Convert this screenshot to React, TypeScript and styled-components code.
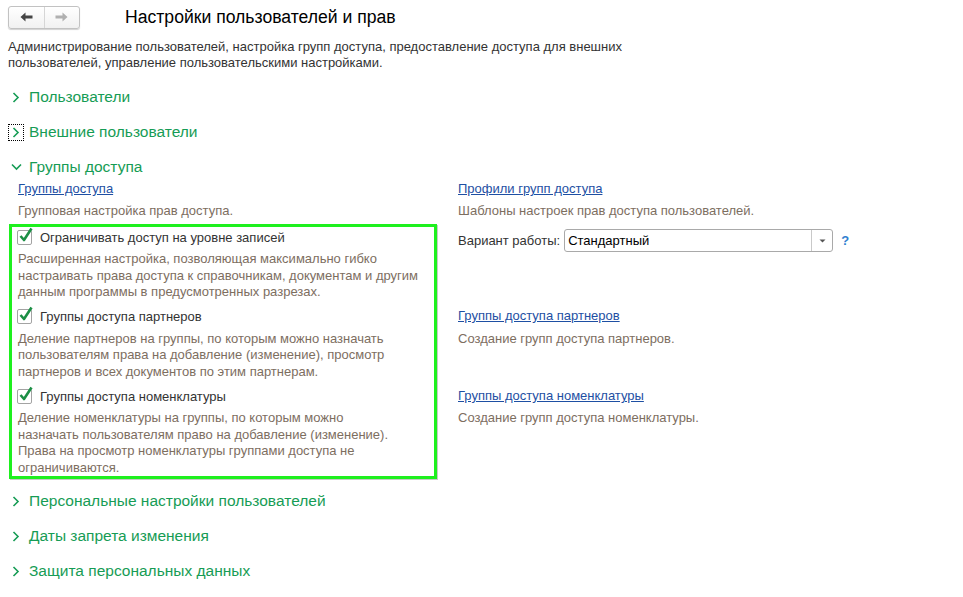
import styled, { createGlobalStyle } from "styled-components";

const GlobalStyle = createGlobalStyle`
  html, body {
    margin: 0;
    padding: 0;
    background: #fff;
  }
  body {
    font-family: "Liberation Sans", Arial, sans-serif;
    font-size: 13px;
    color: #333;
  }
`;

const Page = styled.div`
  width: 963px;
  height: 597px;
  padding: 5px 0 0 8px;
  box-sizing: border-box;
  overflow: hidden;
`;

const TopBar = styled.div`
  display: flex;
  align-items: center;
  height: 24px;
`;

const NavGroup = styled.div`
  display: flex;
  width: 72px;
  height: 23px;
  border: 1px solid #c2c2c2;
  border-radius: 3px;
  background: linear-gradient(#ffffff, #f1f1f1);
  box-shadow: 0 1px 1px rgba(0, 0, 0, 0.18);
  box-sizing: border-box;
`;

const NavButton = styled.div<{ $last?: boolean }>`
  flex: 1;
  display: flex;
  align-items: center;
  justify-content: center;
  border-left: ${({ $last }) => ($last ? "1px solid #d6d6d6" : "none")};
`;

const Title = styled.h1`
  margin: 0 0 0 45px;
  font-size: 17.6px;
  font-weight: normal;
  color: #000;
  line-height: 24px;
`;

const Intro = styled.p`
  margin: 10px 0 0 0;
  width: 660px;
  line-height: 16px;
  color: #333;
`;

const SectionHeader = styled.div<{ $gap?: number }>`
  display: flex;
  align-items: center;
  height: 24px;
  margin-top: ${({ $gap }) => ($gap ?? 11)}px;
  color: #169c55;
  font-size: 15.5px;
`;

const ChevronBox = styled.span<{ $focused?: boolean }>`
  display: flex;
  align-items: center;
  justify-content: center;
  width: 16px;
  height: 17px;
  margin-right: 5px;
  box-sizing: border-box;
  border: 1px dotted ${({ $focused }) => ($focused ? "#000" : "transparent")};
`;

const Columns = styled.div`
  display: flex;
  margin-top: 2px;
`;

const LeftColumn = styled.div`
  width: 428px;
  margin-left: 1px;
`;

const RightColumn = styled.div`
  display: flex;
  flex-direction: column;
  margin-left: 21px;
`;

const Link = styled.a<{ $top?: number }>`
  display: block;
  margin-top: ${({ $top }) => $top ?? 0}px;
  line-height: 16px;
  color: #1e4fa3;
  text-decoration: underline;
  cursor: pointer;
`;

const Hint = styled.div<{ $top?: number }>`
  margin-top: ${({ $top }) => $top ?? 6}px;
  line-height: 16px;
  color: #7d6e5f;
`;

const Indent = styled.div`
  padding-left: 9px;
`;

const Highlight = styled.div`
  margin-top: 5px;
  border: 3px solid #1ef01e;
  box-shadow: 1px 1px 0 #c9c9c9;
  padding: 0 6px 0 5px;
`;

const OptionRow = styled.label`
  display: flex;
  align-items: center;
  height: 20px;
  color: #333;
`;

const CheckBox = styled.span`
  position: relative;
  width: 15px;
  height: 15px;
  margin-right: 8px;
  border: 1px solid #a3a3a3;
  border-radius: 2px;
  background: #fff;
  box-sizing: border-box;
`;

const CheckMark = styled.svg`
  position: absolute;
  left: 1px;
  top: -4px;
`;

const OptionHint = styled.div<{ $last?: boolean }>`
  margin: 4px 0 ${({ $last }) => ($last ? 0 : 6)}px 1px;
  line-height: 16.5px;
  color: #7d6e5f;
`;

const FieldRow = styled.div`
  display: flex;
  align-items: center;
  margin-top: 10px;
  height: 23px;
`;

const FieldLabel = styled.span`
  color: #333;
  margin-right: 4px;
`;

const Select = styled.div`
  display: flex;
  width: 269px;
  height: 23px;
  border: 1px solid #a9a9a9;
  border-radius: 3px;
  box-sizing: border-box;
`;

const SelectValue = styled.div`
  flex: 1;
  display: flex;
  align-items: center;
  padding-left: 3px;
  color: #000;
`;

const SelectButton = styled.div`
  width: 20px;
  display: flex;
  align-items: center;
  justify-content: center;
  border-left: 1px solid #c9c9c9;
`;

const HelpMark = styled.span`
  margin-left: 8px;
  color: #2f7fd0;
  font-weight: bold;
  font-size: 13px;
`;

const ChevronRight = () => (
  <svg width="8" height="11" viewBox="0 0 8 11">
    <path d="M1.5 1 L6 5.5 L1.5 10" fill="none" stroke="#169c55" strokeWidth="1.6" />
  </svg>
);

const ChevronDown = () => (
  <svg width="11" height="8" viewBox="0 0 11 8">
    <path d="M1 1.5 L5.5 6 L10 1.5" fill="none" stroke="#169c55" strokeWidth="1.6" />
  </svg>
);

const Arrow = ({ dir, color }: { dir: "left" | "right"; color: string }) => (
  <svg width="13" height="10" viewBox="0 0 13 10">
    <g transform={dir === "right" ? "translate(13,0) scale(-1,1)" : undefined}>
      <path d="M0.5 5 L5.5 0.5 L5.5 3.5 L12.5 3.5 L12.5 6.5 L5.5 6.5 L5.5 9.5 Z" fill={color} />
    </g>
  </svg>
);

const Checked = ({ children }: { children: string }) => (
  <OptionRow>
    <CheckBox>
      <CheckMark width="14" height="16" viewBox="0 0 14 16">
        <path d="M1.5 9 L5 13 L12.5 1.5" fill="none" stroke="#1c8f45" strokeWidth="2.6" strokeLinejoin="round" />
      </CheckMark>
    </CheckBox>
    {children}
  </OptionRow>
);

export default function App() {
  return (
    <Page>
      <GlobalStyle />
      <TopBar>
        <NavGroup>
          <NavButton>
            <Arrow dir="left" color="#454545" />
          </NavButton>
          <NavButton $last>
            <Arrow dir="right" color="#b0b0b0" />
          </NavButton>
        </NavGroup>
        <Title>Настройки пользователей и прав</Title>
      </TopBar>

      <Intro>
        Администрирование пользователей, настройка групп доступа, предоставление доступа для внешних
        пользователей, управление пользовательскими настройками.
      </Intro>

      <SectionHeader $gap={14}>
        <ChevronBox>
          <ChevronRight />
        </ChevronBox>
        Пользователи
      </SectionHeader>
      <SectionHeader>
        <ChevronBox $focused>
          <ChevronRight />
        </ChevronBox>
        Внешние пользователи
      </SectionHeader>
      <SectionHeader>
        <ChevronBox>
          <ChevronDown />
        </ChevronBox>
        Группы доступа
      </SectionHeader>

      <Columns>
        <LeftColumn>
          <Indent>
            <Link>Группы доступа</Link>
            <Hint>Групповая настройка прав доступа.</Hint>
          </Indent>
          <Highlight>
            <Checked>Ограничивать доступ на уровне записей</Checked>
            <OptionHint>
              Расширенная настройка, позволяющая максимально гибко
              <br />
              настраивать права доступа к справочникам, документам и другим
              <br />
              данным программы в предусмотренных разрезах.
            </OptionHint>
            <Checked>Группы доступа партнеров</Checked>
            <OptionHint>
              Деление партнеров на группы, по которым можно назначать
              <br />
              пользователям права на добавление (изменение), просмотр
              <br />
              партнеров и всех документов по этим партнерам.
            </OptionHint>
            <Checked>Группы доступа номенклатуры</Checked>
            <OptionHint $last>
              Деление номенклатуры на группы, по которым можно
              <br />
              назначать пользователям право на добавление (изменение).
              <br />
              Права на просмотр номенклатуры группами доступа не
              <br />
              ограничиваются.
            </OptionHint>
          </Highlight>
        </LeftColumn>

        <RightColumn>
          <Link>Профили групп доступа</Link>
          <Hint>Шаблоны настроек прав доступа пользователей.</Hint>
          <FieldRow>
            <FieldLabel>Вариант работы:</FieldLabel>
            <Select>
              <SelectValue>Стандартный</SelectValue>
              <SelectButton>
                <svg width="7" height="4" viewBox="0 0 7 4">
                  <path d="M0.5 0.5 L6.5 0.5 L3.5 3.5 Z" fill="#555" />
                </svg>
              </SelectButton>
            </Select>
            <HelpMark>?</HelpMark>
          </FieldRow>
          <Link $top={56}>Группы доступа партнеров</Link>
          <Hint $top={7}>Создание групп доступа партнеров.</Hint>
          <Link $top={41}>Группы доступа номенклатуры</Link>
          <Hint>Создание групп доступа номенклатуры.</Hint>
        </RightColumn>
      </Columns>

      <SectionHeader $gap={10}>
        <ChevronBox>
          <ChevronRight />
        </ChevronBox>
        Персональные настройки пользователей
      </SectionHeader>
      <SectionHeader>
        <ChevronBox>
          <ChevronRight />
        </ChevronBox>
        Даты запрета изменения
      </SectionHeader>
      <SectionHeader $gap={11}>
        <ChevronBox>
          <ChevronRight />
        </ChevronBox>
        Защита персональных данных
      </SectionHeader>
    </Page>
  );
}
